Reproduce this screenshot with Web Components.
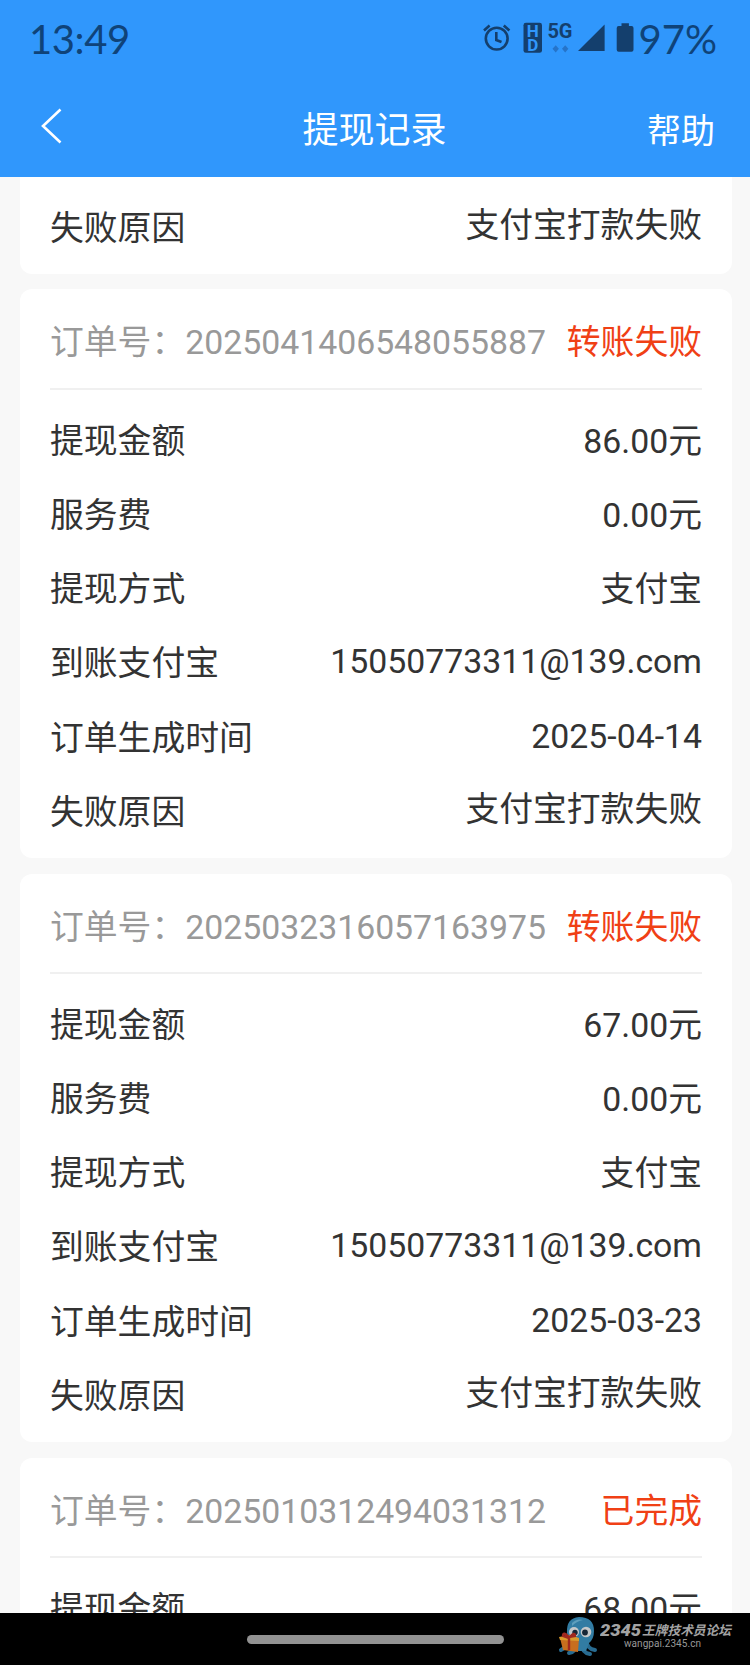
<!DOCTYPE html>
<html lang="zh-CN">
<head>
<meta charset="UTF-8">
<title>提现记录</title>
<style>
  body {
    margin: 0;
    background: #f8f8f8;
  }
</style>
</head>
<body>
<withdraw-app></withdraw-app>

<script>
// status-bar
class StatusBar extends HTMLElement {
  constructor() {
    super();
    this.attachShadow({ mode: "open" });
  }

  connectedCallback() {
    this.shadowRoot.innerHTML = `
      <style>
        :host {
          display: flex;
          justify-content: space-between;
          height: 78px;
          padding: 0 33px 0 29px;
          box-sizing: border-box;
          font-family: Lato, sans-serif;
          color: #0f4379;
        }
        .time {
          font-size: 40px;
          line-height: 78px;
          letter-spacing: -0.4px;
        }
        .right {
          display: flex;
          align-items: flex-start;
        }
        svg {
          display: block;
          margin-top: 20px;
          margin-right: 1px;
        }
        .percent {
          font-size: 40px;
          line-height: 78px;
        }
      </style>
      <span class="time">${this.getAttribute("time")}</span>
      <div class="right">
        <svg width="158" height="38" viewBox="480 20 158 38" fill="#143f6d">
          <!-- alarm -->
          <g fill="none" stroke="#143f6d" stroke-width="2.6">
            <circle cx="496.7" cy="38.6" r="10.9"/>
            <path d="M484 30.5 L489.6 25.5 M503.8 25.5 L509.4 30.5"/>
            <path d="M496.3 32 V40 L501.5 42"/>
          </g>
          <!-- HD -->
          <rect x="523.5" y="22.8" width="18.5" height="30" rx="2.4"/>
          <g font-family="Roboto, sans-serif" font-weight="700" fill="#3097fc" text-anchor="middle">
            <text x="532.8" y="36.8" font-size="17">H</text>
            <text x="532.8" y="51" font-size="17">D</text>
          </g>
          <text x="547.4" y="38.3" font-family="Roboto, sans-serif" font-weight="700" font-size="20">5G</text>
          <path fill="#2674c9" d="M555.7 45.2 l3.2 3.6 -3.2 3.6 -3.2 -3.6z M565.2 45.2 l3.2 3.6 -3.2 3.6 -3.2 -3.6z"/>
          <!-- signal -->
          <path d="M604.6 24.5 V51 H578z"/>
          <!-- battery -->
          <path d="M621.5 23.3 h7.4 v2.6 h2.6 q2 0 2 2 V49.8 q0 2 -2 2 h-12.8 q-2 0 -2 -2 V27.9 q0 -2 2 -2 h2.8z"/>
        </svg>
        <span class="percent">${this.getAttribute("battery")}</span>
      </div>
    `;
  }
}
customElements.define("status-bar", StatusBar);

// nav-bar
class NavBar extends HTMLElement {
  constructor() {
    super();
    this.attachShadow({ mode: "open" });
  }

  connectedCallback() {
    this.shadowRoot.innerHTML = `
      <style>
        :host {
          display: grid;
          grid-template-columns: 1fr auto 1fr;
          align-items: center;
          height: 99px;
          padding: 0 35px 0 40px;
          box-sizing: border-box;
          color: #fff;
          font-size: 34px;
        }
        svg {
          display: block;
          margin-bottom: 3px;
        }
        .title {
          font-size: 36px;
          padding: 0 6px 2px 0;
        }
        .action {
          text-align: right;
          padding-top: 1px;
        }
      </style>
      <svg width="24" height="38" viewBox="40 107 24 38" fill="none" stroke="#fff" stroke-width="2.6">
        <path d="M60.5 109.5 L43 126 L60.5 142.5"/>
      </svg>
      <span class="title"><slot></slot></span>
      <span class="action"><slot name="action"></slot></span>
    `;
  }
}
customElements.define("nav-bar", NavBar);

// record-row: one label / value line
class RecordRow extends HTMLElement {
  constructor() {
    super();
    this.attachShadow({ mode: "open" });
  }

  connectedCallback() {
    this.shadowRoot.innerHTML = `
      <style>
        :host {
          display: flex;
          justify-content: space-between;
          height: 74.2px;
          line-height: 77px;
          color: #333;
          white-space: nowrap;
        }
        .value {
          height: 74.2px;
        }
        :host([raised]) .value {
          margin-top: -3px;
        }
        :host([latin]) .value {
          font-family: Roboto, sans-serif;
          margin-top: -2px;
        }
      </style>
      <span>${this.getAttribute("label")}</span>
      <span class="value"><slot></slot></span>
    `;
  }
}
customElements.define("record-row", RecordRow);

// record-card
class RecordCard extends HTMLElement {
  constructor() {
    super();
    this.attachShadow({ mode: "open" });
  }

  connectedCallback() {
    const order = this.getAttribute("order");

    this.shadowRoot.innerHTML = `
      <style>
        :host {
          display: block;
          padding: 0 30px 10px;
          border-radius: 12px;
          background: #fff;
        }
        :host([continued]) {
          padding-top: 12.6px;
          border-radius: 0 0 12px 12px;
        }
        header {
          display: flex;
          justify-content: space-between;
          height: 100.6px;
          padding-top: 4px;
          margin-bottom: 12.7px;
          box-sizing: border-box;
          border-bottom: 2px solid #f0f0f0;
          line-height: 100px;
          color: #999;
          white-space: nowrap;
        }
        .status {
          color: #f04015;
        }
      </style>
      ${order ? `<header>
        <span>订单号：${order}</span>
        <span class="status">${this.getAttribute("status")}</span>
      </header>` : ""}
      <slot></slot>
    `;
  }
}
customElements.define("record-card", RecordCard);

// forum-mark
class ForumMark extends HTMLElement {
  constructor() {
    super();
    this.attachShadow({ mode: "open" });
  }

  connectedCallback() {
    this.shadowRoot.innerHTML = `
      <style>
        :host {
          display: flex;
          gap: 2px;
          color: #999;
        }
        svg {
          display: block;
        }
      </style>
      <svg width="41" height="42" viewBox="0 0 41 42">
        <g fill="none" stroke="#286b91" stroke-width="4" stroke-linecap="round">
          <path d="M14 25 Q10 31 4 34"/>
          <path d="M18 29 Q19 36 12 37"/>
          <path d="M25 28 Q25 37 33 38"/>
          <path d="M29 24 Q30 33 38 34"/>
        </g>
        <path fill="#327ca3" d="M10 17 Q9 2 22 1 Q37 1 37 15 Q37 23 32 27 L29 35 H14 L15 27 Q10 23 10 17z"/>
        <path fill="#5e9fbd" d="M15 7 Q20 2 26 4 Q20 5 15 10z"/>
        <circle cx="17" cy="16" r="5" fill="#c4c8ca"/>
        <circle cx="29" cy="16" r="5.3" fill="#c4c8ca"/>
        <circle cx="18" cy="16.5" r="2.7" fill="#172737"/>
        <circle cx="28" cy="16.5" r="2.9" fill="#172737"/>
        <path fill="#c76e1e" d="M3 22 L22 22 L21 36 L6 34z"/>
        <path fill="#d99a2d" d="M2 21 L13 19 L22 22 V25 L3 24z"/>
        <path fill="none" stroke="#9f281e" stroke-width="2.4" d="M12 23 V34 M12 21 Q6 15 6 20 L12 22 Q18 15 18 20z"/>
      </svg>
      <svg width="136" height="42" viewBox="0 0 136 42" fill="#a3a3a3">
        <g font-weight="700" font-style="italic">
          <text x="0" y="19.5" font-family="Roboto, sans-serif" font-weight="900" font-size="16" textLength="41" lengthAdjust="spacingAndGlyphs">2345</text>
          <text x="42" y="19" font-size="13" textLength="89" lengthAdjust="spacingAndGlyphs">王牌技术员论坛</text>
        </g>
        <text x="24" y="31" font-family="Roboto, sans-serif" font-size="10" textLength="77" fill="#999">wangpai.2345.cn</text>
      </svg>
    `;
  }
}
customElements.define("forum-mark", ForumMark);

// gesture-bar
class GestureBar extends HTMLElement {
  constructor() {
    super();
    this.attachShadow({ mode: "open" });
  }

  connectedCallback() {
    this.shadowRoot.innerHTML = `
      <style>
        :host {
          display: grid;
          grid-template-columns: 1fr 257px 1fr;
          align-items: start;
          height: 52px;
          background: #000;
        }
        .handle {
          grid-column: 2;
          height: 9px;
          margin-top: 22px;
          border-radius: 5px;
          background: #929292;
        }
        forum-mark {
          justify-self: end;
          margin-top: 3px;
          margin-right: 14px;
        }
      </style>
      <div class="handle"></div>
      <forum-mark></forum-mark>
    `;
  }
}
customElements.define("gesture-bar", GestureBar);

// withdraw-app
const records = [
  { order: "2025041406548055887", status: "转账失败", amount: "86.00元", date: "2025-04-14" },
  { order: "2025032316057163975", status: "转账失败", amount: "67.00元", date: "2025-03-23" },
];

class WithdrawApp extends HTMLElement {
  constructor() {
    super();
    this.attachShadow({ mode: "open" });
  }

  connectedCallback() {
    this.render();
  }

  render() {
    this.shadowRoot.innerHTML = `
      <style>
        :host {
          display: flex;
          flex-direction: column;
          height: 1665px;
          font-family: Roboto, "Noto Sans CJK SC", sans-serif;
          font-size: 33.8px;
        }
        .top {
          flex: none;
          background: #3097fc;
        }
        main {
          flex: 1;
          min-height: 0;
          overflow: hidden;
          display: flex;
          flex-direction: column;
          gap: 15.7px;
          padding: 0 18px 0 20px;
        }
        record-card {
          flex: none;
        }
        gesture-bar {
          flex: none;
        }
      </style>
      <div class="top">
        <status-bar time="13:49" battery="97%"></status-bar>
        <nav-bar>提现记录<span slot="action">帮助</span></nav-bar>
      </div>
      <main>
        <record-card continued>
          <record-row label="失败原因" raised>支付宝打款失败</record-row>
        </record-card>
        ${records.map((r) => `
          <record-card order="${r.order}" status="${r.status}">
            <record-row label="提现金额">${r.amount}</record-row>
            <record-row label="服务费">0.00元</record-row>
            <record-row label="提现方式">支付宝</record-row>
            <record-row label="到账支付宝" latin>15050773311@139.com</record-row>
            <record-row label="订单生成时间" latin>${r.date}</record-row>
            <record-row label="失败原因" raised>支付宝打款失败</record-row>
          </record-card>
        `).join("")}
        <record-card order="2025010312494031312" status="已完成">
          <record-row label="提现金额">68.00元</record-row>
        </record-card>
      </main>
      <gesture-bar></gesture-bar>
    `;
  }
}
customElements.define("withdraw-app", WithdrawApp);
</script>
</body>
</html>
